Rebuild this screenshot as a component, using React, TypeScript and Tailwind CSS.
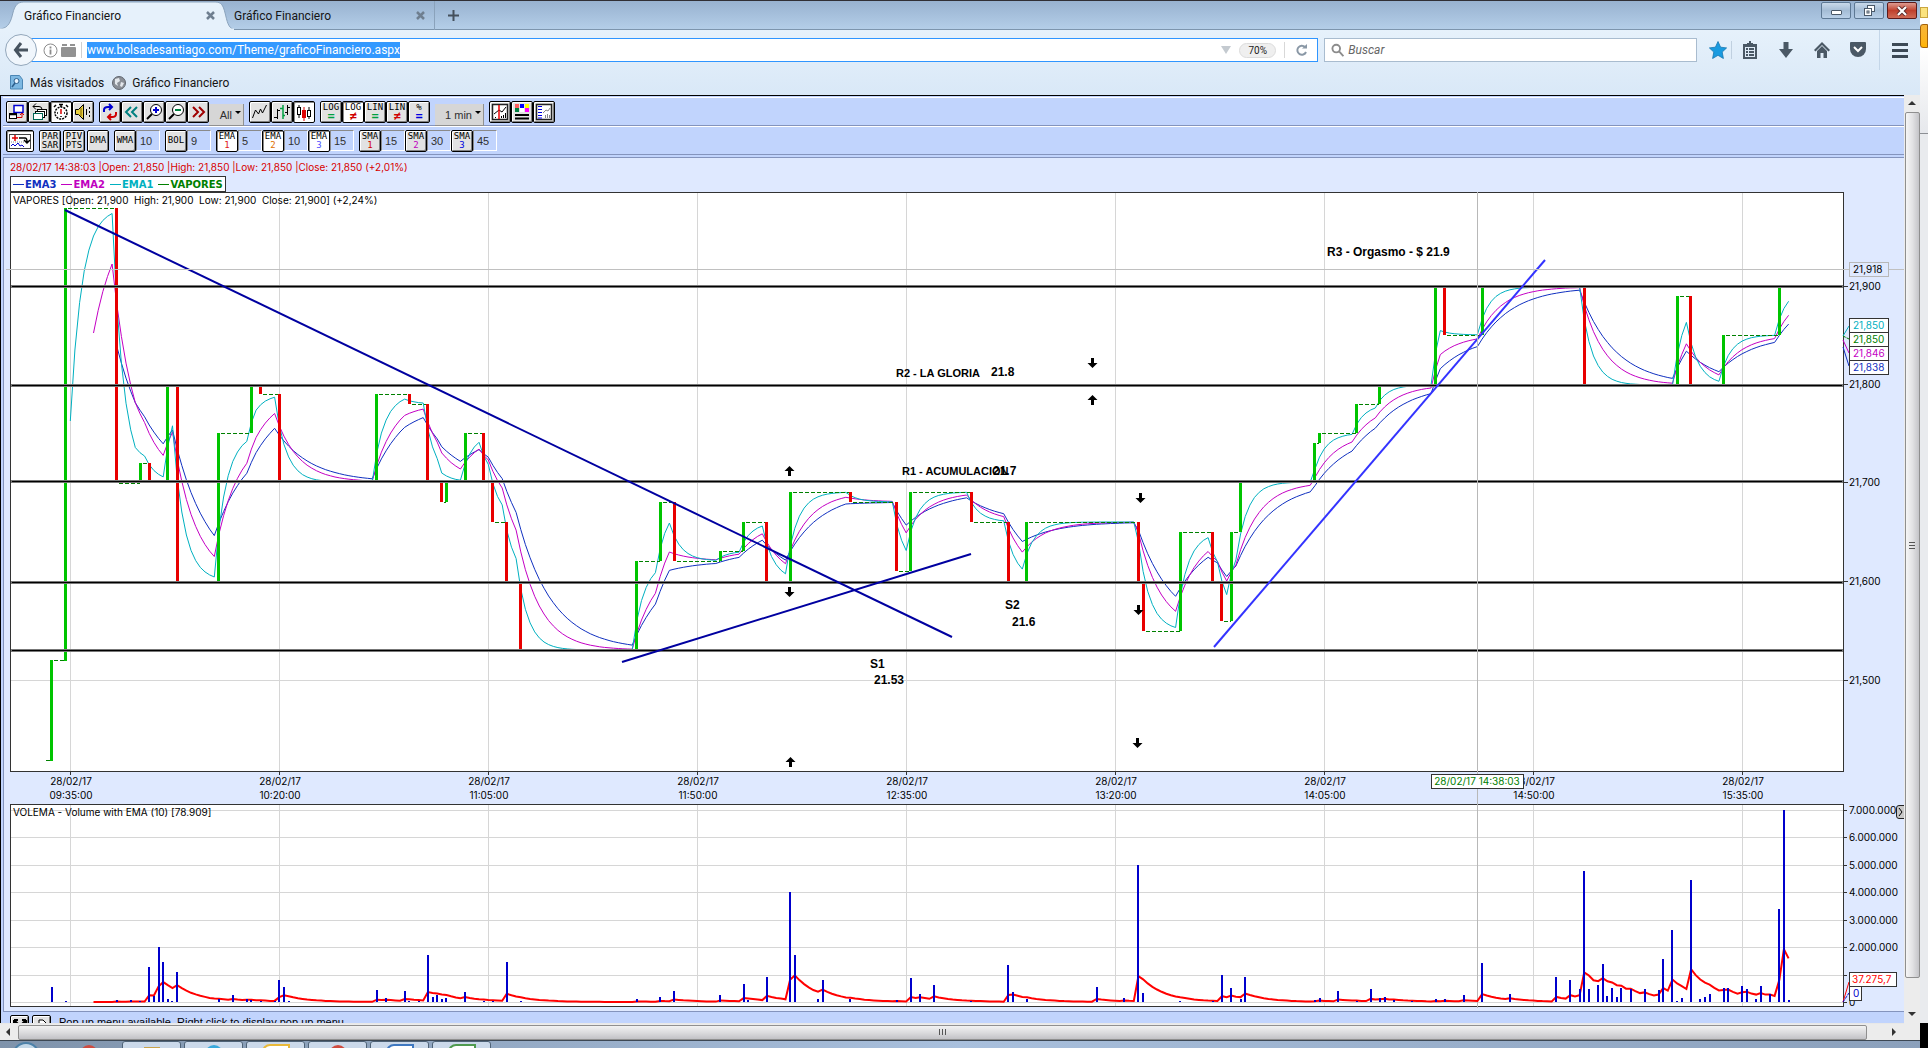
import React from "react";

const UI = "font-['Roboto',sans-serif]";
const CHART_FONT = "font-['Inter',sans-serif]";
const LEGEND_FONT = "font-['DejaVu_Sans',sans-serif]";

/* ---------- market data ---------- */

const FIRST_X = 70.3;
const STEP = 4.644;
const LAST_BAR = 370;
const barX = (k: number) => FIRST_X + k * STEP;

// x, top, bottom, direction (1 = up, 0 = down)
const CANDLES: [number, number, number, 0 | 1][] = [
  [51, 660, 761, 1], [65, 208, 661, 1], [116, 208, 483, 0], [140, 463, 482, 1], [149, 463, 482, 0],
  [167, 385, 482, 1], [177, 385, 581, 0], [218, 433, 581, 1], [251, 385, 433, 1], [260, 385, 394, 0],
  [279, 394, 482, 0], [376, 394, 482, 1], [409, 394, 404, 0], [427, 404, 482, 0], [441, 482, 502, 0],
  [446, 482, 502, 1], [465, 433, 482, 1], [483, 433, 482, 0], [492, 482, 522, 0], [506, 522, 581, 0],
  [520, 581, 650, 0], [636, 561, 650, 1], [660, 502, 561, 1], [674, 502, 561, 0], [720, 551, 561, 1],
  [743, 522, 551, 1], [766, 522, 581, 0], [790, 492, 581, 1], [850, 492, 502, 0], [896, 502, 571, 0],
  [910, 492, 571, 1], [971, 492, 522, 0], [1008, 522, 581, 0], [1026, 522, 581, 1], [1138, 522, 581, 0],
  [1143, 581, 631, 0], [1180, 532, 631, 1], [1212, 532, 581, 0], [1221, 581, 621, 0], [1231, 532, 621, 1],
  [1240, 482, 532, 1], [1314, 443, 482, 1], [1319, 433, 443, 1], [1356, 404, 433, 1], [1379, 385, 404, 1],
  [1435, 287, 385, 1], [1444, 287, 335, 0], [1482, 287, 335, 1], [1584, 287, 385, 0], [1677, 296, 385, 1],
  [1690, 296, 385, 0], [1723, 335, 385, 1], [1779, 287, 335, 1],
];

const closeOf = (c: [number, number, number, 0 | 1]) => (c[3] ? c[1] : c[2]);

const closeAt = (k: number) => {
  let y = 760;
  for (const c of CANDLES) {
    if (Math.round((c[0] - 70) / STEP) <= k) y = closeOf(c);
  }
  return y;
};

const emaPoints = (period: number, start: number, seed: number) => {
  const a = 2 / (period + 1);
  let v = seed;
  const pts: string[] = [];
  for (let k = start; k <= LAST_BAR; k++) {
    if (k > start) v += (closeAt(k) - v) * a;
    pts.push(`${barX(k).toFixed(1)},${v.toFixed(1)}`);
  }
  return pts.join(" ");
};

// minute index, bar height
const VOLUME: [number, number][] = [
  [-4, 15], [-1, 1], [10, 2], [13, 2], [15, 1], [17, 35], [18, 6], [19, 55], [20, 40], [21, 3], [22, 1], [23, 30],
  [32, 3], [35, 7], [38, 3], [39, 2], [41, 1], [44, 1], [45, 22], [46, 15], [47, 1], [66, 12], [68, 4], [72, 11],
  [73, 1], [75, 1], [77, 47], [78, 5], [79, 7], [80, 3], [81, 4], [85, 10], [89, 1], [91, 1], [94, 40], [97, 1],
  [122, 3], [127, 5], [130, 11], [140, 7], [145, 18], [146, 2], [150, 25], [155, 110], [156, 47], [161, 3],
  [162, 22], [168, 3], [178, 2], [181, 24], [183, 8], [186, 17], [194, 1], [202, 37], [203, 10], [206, 3],
  [221, 15], [227, 4], [230, 137], [231, 9], [239, 1], [246, 1], [248, 27], [250, 14], [252, 3], [253, 25],
  [268, 2], [269, 4], [273, 11], [277, 1], [280, 13], [282, 4], [283, 5], [285, 2], [289, 1], [294, 3], [296, 3],
  [300, 7], [304, 39], [310, 8], [320, 25], [323, 22], [325, 13], [326, 131], [327, 13], [329, 17], [330, 38],
  [331, 6], [332, 14], [333, 5], [334, 14], [336, 13], [339, 13], [342, 12], [343, 43], [345, 72], [346, 1],
  [347, 4], [349, 122], [351, 3], [352, 5], [353, 8], [356, 14], [357, 14], [360, 16], [361, 13], [363, 3],
  [364, 16], [366, 8], [368, 93], [369, 192], [370, 2],
];

const volumeEma = () => {
  const m = new Map(VOLUME);
  let v = 0;
  const pts: string[] = [];
  for (let k = 5; k <= LAST_BAR; k++) {
    v += ((m.get(k) ?? 0) - v) * (2 / 11);
    pts.push(`${barX(k).toFixed(1)},${(1002 - v).toFixed(1)}`);
  }
  return pts.join(" ");
};

const TIMES = ["09:35:00", "10:20:00", "11:05:00", "11:50:00", "12:35:00", "13:20:00", "14:05:00", "14:50:00", "15:35:00"];
const GRID_X = TIMES.map((_, i) => 70 + 209 * i);
const LEVELS = [286, 385, 481, 582, 650];
const ARROWS: [number, number, boolean][] = [
  [789, 471, true], [789, 592, false], [790, 762, true], [1092, 363, false],
  [1092, 400, true], [1140, 498, false], [1138, 610, false], [1137, 743, false],
];
const NOTES: [string, number, number, boolean][] = [
  ["R3 - Orgasmo - $ 21.9", 1327, 256, false],
  ["R2 - LA GLORIA", 896, 377, true],
  ["21.8", 991, 376, false],
  ["R1 - ACUMULACION", 902, 475, true],
  ["21.7", 993, 475, false],
  ["S2", 1005, 609, false],
  ["21.6", 1012, 626, false],
  ["S1", 870, 668, false],
  ["21.53", 874, 684, false],
];

function PriceChart() {
  return (
    <svg viewBox="4 192 1900 612" className={`block w-full ${CHART_FONT} text-[10px]`} role="img" aria-label="VAPORES">
      <rect x="10.5" y="192.5" width="1833" height="579" fill="#fff" stroke="#333" />
      {GRID_X.map((x) => (
        <line key={x} x1={x + 0.5} x2={x + 0.5} y1="193" y2="771" stroke="#d6d6d6" />
      ))}
      {[286, 384, 482, 581, 680].map((y) => (
        <line key={y} x1="11" x2="1843" y1={y + 0.5} y2={y + 0.5} stroke="#d6d6d6" />
      ))}
      <text x="13" y="204">VAPORES [Open: 21,900&nbsp; High: 21,900&nbsp; Low: 21,900&nbsp; Close: 21,900] (+2,24%)</text>

      <g fill="none" strokeWidth="1">
        <polyline points={emaPoints(15, 10, 346)} stroke="#1030c0" />
        <polyline points={emaPoints(10, 5, 333)} stroke="#c400c4" />
        <polyline points={emaPoints(5, 0, 421)} stroke="#00b0c0" />
      </g>
      <line x1="46" x2="50" y1="760.5" y2="760.5" stroke="#008000" />
      {CANDLES.map((c, i) => {
        const end = i + 1 < CANDLES.length ? CANDLES[i + 1][0] : 1781;
        const y = closeOf(c) + 0.5;
        return (
          <line key={c[0]} x1={c[0] + 3} x2={end} y1={y} y2={y} stroke="#008000" strokeDasharray="4 2" />
        );
      })}
      {CANDLES.map((c) => (
        <rect key={c[0]} x={c[0] - 1} y={c[1]} width="3" height={c[2] - c[1]} fill={c[3] ? "#00c400" : "#e80000"} />
      ))}
      {LEVELS.map((y) => (
        <g key={y}>
          <rect x="11" y={y - 1} width="1832" height="3" fill="#777" />
          <rect x="12" y={y} width="1830" height="1" fill="#000" />
        </g>
      ))}
      <g stroke="#0000a0" strokeWidth="2">
        <line x1="65" y1="210" x2="952" y2="637" />
        <line x1="622" y1="662" x2="971" y2="554" />
        <line x1="1214" y1="647" x2="1545" y2="260" stroke="#3333ff" />
      </g>
      <line x1="6" x2="1904" y1="269.5" y2="269.5" stroke="#c0c0c0" />
      <line x1="1477.5" x2="1477.5" y1="192" y2="804" stroke="#b8b8b8" />

      {ARROWS.map(([x, y, up]) => (
        <path
          key={`${x}-${y}`}
          transform={`translate(${x + 0.5} ${y})${up ? "" : " rotate(180)"}`}
          d="M0 -5 L5 0 H1.500 V5 H-1.500 V0 H-5 Z"
          fill="#000"
        />
      ))}
      {NOTES.map(([t, x, y, small]) => (
        <text
          key={t}
          x={x}
          y={y}
          className={small ? "font-['Liberation_Sans',sans-serif] text-[11px] font-bold" : "font-['Liberation_Sans',sans-serif] text-[12px] font-bold"}
        >
          {t}
        </text>
      ))}

      {[["21,900", 286], ["21,800", 384], ["21,700", 482], ["21,600", 581], ["21,500", 680]].map(([t, y]) => (
        <g key={t}>
          <line x1="1844" x2="1848" y1={+y + 0.5} y2={+y + 0.5} stroke="#333" />
          <text x="1849" y={+y + 4}>{t}</text>
        </g>
      ))}
      <rect x="1849.5" y="262.5" width="39" height="14" fill="#dfe9ff" stroke="#b8b8b8" />
      <text x="1853" y="273">21,918</text>
      <g fill="none">
        <path d="M1843 336 L1849 326" stroke="#00b0c0" />
        <path d="M1843 336 L1849 339" stroke="#008000" strokeDasharray="3 1" />
        <path d="M1843 340 L1849 353" stroke="#c400c4" />
        <path d="M1843 347 L1849 366" stroke="#1030c0" />
      </g>
      {[["21,850", "#00b0c0"], ["21,850", "#008000"], ["21,846", "#c400c4"], ["21,838", "#1030c0"]].map(([t, c], i) => (
        <g key={i}>
          <rect x="1849.5" y={318.5 + i * 14} width="39" height="14" fill="#fff" stroke="#333" />
          <text x="1853" y={329 + i * 14} fill={c}>{t}</text>
        </g>
      ))}
      {TIMES.map((t, i) => (
        <g key={t} textAnchor="middle">
          <line x1={GRID_X[i] + 0.5} x2={GRID_X[i] + 0.5} y1="772" y2="775" stroke="#333" />
          <text x={GRID_X[i] + 1} y="785">28/02/17</text>
          <text x={GRID_X[i] + 1} y="799">{t}</text>
        </g>
      ))}
      <rect x="1431.5" y="774.5" width="92" height="14" fill="#fff" stroke="#333" />
      <text x="1477" y="785" textAnchor="middle" fill="#008000">28/02/17 14:38:03</text>
    </svg>
  );
}

function VolumeChart() {
  const rows = [
    ["7.000.000", 810], ["6.000.000", 837], ["5.000.000", 865], ["4.000.000", 892],
    ["3.000.000", 920], ["2.000.000", 947], ["", 975], ["0", 1002],
  ] as [string, number][];
  return (
    <svg viewBox="4 804 1900 206" className={`block w-full ${CHART_FONT} text-[10px]`} role="img" aria-label="VOLEMA">
      <rect x="10.5" y="804.5" width="1833" height="202" fill="#fff" stroke="#333" />
      {GRID_X.map((x) => (
        <line key={x} x1={x + 0.5} x2={x + 0.5} y1="805" y2="1006" stroke="#d6d6d6" />
      ))}
      {rows.map(([t, y]) => (
        <g key={y}>
          <line x1="11" x2="1843" y1={y + 0.5} y2={y + 0.5} stroke="#d6d6d6" />
          <line x1="1844" x2="1847" y1={y + 0.5} y2={y + 0.5} stroke="#333" />
          <text x="1849" y={y + 4}>{t}</text>
        </g>
      ))}
      <line x1="1477.5" x2="1477.5" y1="804" y2="1008" stroke="#b8b8b8" />
      <text x="13" y="816">VOLEMA - Volume with EMA (10) [78.909]</text>
      <polyline points={volumeEma()} fill="none" stroke="#ff0000" strokeWidth="2" />
      {VOLUME.map(([k, h]) => (
        <rect key={k} x={Math.round(barX(k)) - 1} y={1002 - h} width="2" height={h} fill="#0000cc" />
      ))}
      <path d="M1843 1002 L1849 982" stroke="#f00" />
      <path d="M1843 1002 L1849 993" stroke="#00c" strokeDasharray="3 1" />
      <rect x="1849.5" y="972.5" width="47" height="14" fill="#fff" stroke="#333" />
      <text x="1852" y="983" fill="#f00">37.275,7</text>
      <rect x="1849.5" y="986.5" width="12" height="14" fill="#fff" stroke="#333" />
      <text x="1853" y="997" fill="#00c">0</text>
      <path d="M1905 805.5 H1899 Q1896.5 805.5 1896.5 808 V816 Q1896.5 818.5 1899 818.5 H1905" fill="#c8c8c8" stroke="#222" />
      <path d="M1899 808 L1902 812 L1899 816" fill="none" stroke="#000" />
    </svg>
  );
}

/* ---------- toolbar ---------- */

type BtnProps = { label: string; on?: boolean; wide?: boolean; small?: boolean; children: React.ReactNode };

function ToolButton({ label, on, wide, small, children }: BtnProps) {
  return (
    <button
      type="button"
      aria-label={label}
      className={`flex h-[22px] ${wide ? "w-[28px]" : small ? "w-[19px]" : "w-[22px]"} shrink-0 flex-col items-center justify-center overflow-hidden rounded-[2px] border border-black p-px ${
        on
          ? "bg-white shadow-[inset_1px_1px_0_#888]"
          : "bg-[#e2e2e2] shadow-[inset_1px_1px_0_#fff,inset_-1px_-1px_0_#808080]"
      }`}
    >
      {children}
    </button>
  );
}

function Pic({ children, w = 18 }: { children: React.ReactNode; w?: number }) {
  return (
    <svg width={w} height="18" viewBox={`0 0 ${w} 18`} fill="none" stroke="#000" strokeWidth="1" className="shrink-0">
      {children}
    </svg>
  );
}

const MONO = "font-['DejaVu_Sans_Mono',monospace]";

function TextBtn({ top, bottom, color = "text-black", on, big }: { top: string; bottom?: string; color?: string; on?: boolean; big?: boolean }) {
  return (
    <ToolButton label={`${top} ${bottom ?? ""}`} on={on}>
      <span className={`${MONO} text-[9px] leading-[9px] text-black`}>{top}</span>
      {bottom && (
        <span className={`${MONO} ${big ? "text-[12px] leading-[8px] font-bold" : "text-[9px] leading-[9px]"} ${color}`}>{bottom}</span>
      )}
    </ToolButton>
  );
}

function NumField({ label, value }: { label: string; value: string }) {
  return (
    <input
      aria-label={label}
      defaultValue={value}
      className="h-[21px] w-[24px] border border-t-[#8a8a8a] border-r-white border-b-white border-l-[#8a8a8a] bg-[#c1d4fd] pl-[3px] font-['Liberation_Sans',sans-serif] text-[11px] text-[#303030]"
    />
  );
}

function Drop({ label, value, cls }: { label: string; value: string; cls: string }) {
  return (
    <div className={`relative h-[22px] ${cls}`}>
      <select
        aria-label={label}
        className="h-full w-full appearance-none border-r border-b border-[#909090] bg-[#d6d6d6] pr-[11px] text-right font-['Liberation_Sans',sans-serif] text-[11px] text-[#303030] [text-align-last:right]"
      >
        <option>{value}</option>
      </select>
      <span className="pointer-events-none absolute top-[10px] right-[3px] border-x-[3px] border-t-[3px] border-x-transparent border-t-black" />
    </div>
  );
}

function ToolbarOne() {
  return (
    <div className="flex h-[29px] items-center gap-[5px] border-t border-b border-t-white border-b-[#8494bd] bg-[#c1d4fd] pl-[3px]">
      <div className="flex">
        <ToolButton label="Detach">
          <Pic>
            <rect x="6" y="2.500" width="9" height="7" fill="#fff" stroke="#0000d0" strokeWidth="1.500" />
            <rect x="1.500" y="10.500" width="7" height="5" fill="#fff" />
            <path d="M2 11.500h7" strokeWidth="1.500" />
            <path d="M9 14.500h5v-4M12 12l2-2 2 2" stroke="#d00000" />
          </Pic>
        </ToolButton>
        <ToolButton label="Cascade">
          <Pic>
            <rect x="7.500" y="6.500" width="9" height="6" fill="#fff" />
            <rect x="5.500" y="8.500" width="9" height="6" fill="#fff" />
            <rect x="3.500" y="10.500" width="9" height="6" fill="#fff" stroke="#065" />
            <path d="M3 3.500h6q3 0 3 3M3 3.500l3-3M3 3.500l3 3" />
          </Pic>
        </ToolButton>
        <ToolButton label="Timer" on>
          <Pic>
            <circle cx="9" cy="10" r="6" strokeDasharray="2 1" strokeWidth="1.500" />
            <path d="M7 1.500h4M9 2v2M2 4l2-2M16 4l-2-2M5 10h1M12 10h1M9 13v1" strokeWidth="1.500" />
            <path d="M9 6v5" stroke="#d00" strokeWidth="1.500" />
          </Pic>
        </ToolButton>
        <ToolButton label="Sound">
          <Pic>
            <path d="M1.500 6.500h3l5-5v15l-5-5h-3z" fill="#e8d040" />
            <path d="M7 5v8" stroke="#806000" />
            <path d="M12.500 6v6M15.500 4v2M15.500 8v2M15.500 12v2" />
          </Pic>
        </ToolButton>
      </div>
      <div className="flex">
        <ToolButton label="Refresh">
          <Pic>
            <path d="M3 9V7q0-3 4-3h3M8 1l3 3-3 3" stroke="#0000d0" strokeWidth="2" />
            <path d="M15 9v2q0 3-4 3H8M10 11l-3 3 3 3" stroke="#d00000" strokeWidth="2" />
          </Pic>
        </ToolButton>
        <ToolButton label="Back">
          <Pic>
            <path d="M8 4L3 9l5 5M14 4L9 9l5 5" stroke="#008080" strokeWidth="2" />
          </Pic>
        </ToolButton>
        <ToolButton label="Zoom in">
          <Pic>
            <circle cx="11" cy="7" r="5.500" fill="#fff" />
            <path d="M7 11l-5 5" strokeWidth="2" />
            <path d="M8 7h6M11 4v6" stroke="#0000d0" strokeWidth="2" />
          </Pic>
        </ToolButton>
        <ToolButton label="Zoom out">
          <Pic>
            <circle cx="11" cy="7" r="5.500" fill="#fff" />
            <path d="M7 11l-5 5" strokeWidth="2" />
            <path d="M8 7h6" stroke="#008040" strokeWidth="2" />
          </Pic>
        </ToolButton>
        <ToolButton label="Forward">
          <Pic>
            <path d="M4 4l5 5-5 5M10 4l5 5-5 5" stroke="#a00000" strokeWidth="2" />
          </Pic>
        </ToolButton>
        <Drop label="Range" value="All" cls="w-[35px]" />
      </div>
      <div className="flex">
        <ToolButton label="Line chart">
          <Pic>
            <path d="M1.500 15l3-8 3 4 2-5 2 4 4-8" />
          </Pic>
        </ToolButton>
        <ToolButton label="Bar chart">
          <Pic>
            <path d="M4.500 6v10M1 14.500h3M4 7.500h3M14.500 2v10M12 9.500h3M15 4.500h2" />
            <path d="M10 2v14M7 5.500h3M10 12.500h2" stroke="#00a040" strokeWidth="1.500" />
          </Pic>
        </ToolButton>
        <ToolButton label="Candles" on>
          <Pic>
            <path d="M4 2v13M14 4v12" />
            <rect x="2.500" y="4.500" width="3" height="7" fill="#fff" />
            <path d="M9 4v14" stroke="#d00" />
            <rect x="7.500" y="7.500" width="3" height="7" fill="#d00" stroke="#d00" />
            <rect x="12.500" y="7.500" width="3" height="6" fill="#fff" />
          </Pic>
        </ToolButton>
      </div>
      <div className="flex">
        <TextBtn top="LOG" bottom="=" color="text-[#00a040]" big />
        <TextBtn top="LOG" bottom="≠" color="text-[#d00000]" on big />
        <TextBtn top="LIN" bottom="=" color="text-[#00a040]" big />
        <TextBtn top="LIN" bottom="≠" color="text-[#d00000]" big />
        <TextBtn top="%" bottom="=" color="text-[#0000e0]" big />
      </div>
      <Drop label="Interval" value="1 min" cls="w-[49px]" />
      <div className="flex">
        <ToolButton label="Crosshair">
          <Pic>
            <rect x="1.500" y="1.500" width="15" height="15" fill="#fff" stroke="#222" strokeWidth="1.500" />
            <path d="M3 11l5-4 3 2 4-5M12.500 12v3M14.500 10v5M10.500 13v2M4.500 14v1" />
            <path d="M8 2v14" stroke="#e00" strokeWidth="1.500" />
          </Pic>
        </ToolButton>
        <ToolButton label="Colors">
          <Pic>
            <g stroke="none">
              <rect x="2" y="1" width="4" height="4" fill="#ff6060" />
              <rect x="7" y="1" width="4" height="4" fill="#0000ff" />
              <rect x="12" y="1" width="4" height="4" fill="#ffff00" />
              <rect x="2" y="5" width="4" height="4" fill="#008040" />
              <rect x="7" y="5" width="4" height="4" fill="#fff" />
              <rect x="12" y="5" width="4" height="4" fill="#ff00ff" />
            </g>
            <path d="M2 12h14M2 15.500h14" strokeWidth="2" />
          </Pic>
        </ToolButton>
        <ToolButton label="Data">
          <Pic>
            <rect x="1.500" y="1.500" width="15" height="15" fill="#fff" stroke="#222" strokeWidth="1.500" />
            <path d="M3 3.500h4M3 6.500h4M3 9.500h4M3 12.500h4M3 15h4" stroke="#0000e0" />
            <path d="M8 10l3-3 2 1 2-3M10.500 12v3M12.500 11v4M14.500 12v3" stroke="#888" />
          </Pic>
        </ToolButton>
      </div>
    </div>
  );
}

function ToolbarTwo() {
  const pairs = [
    ["EMA", "1", "text-[#e02020]", "5", true],
    ["EMA", "2", "text-[#e07000]", "10", true],
    ["EMA", "3", "text-[#5050ff]", "15", true],
    ["SMA", "1", "text-[#d00000]", "15", false],
    ["SMA", "2", "text-[#c000c0]", "30", false],
    ["SMA", "3", "text-[#0000e0]", "45", false],
  ] as [string, string, string, string, boolean][];
  const group = (list: typeof pairs) => (
    <div className="flex">
      {list.map(([t, b, c, v, on]) => (
        <div key={t + b} className="flex items-center">
          <TextBtn top={t} bottom={b} color={c} on={on} />
          <NumField label={`${t} ${b} period`} value={v} />
        </div>
      ))}
    </div>
  );
  return (
    <div className="flex h-[29px] items-center gap-[5px] border-t border-b border-t-white border-b-[#8494bd] bg-[#c1d4fd] pl-[3px]">
      <ToolButton label="Indicators" wide on>
        <Pic w={24}>
          <rect x="1.500" y="2.500" width="21" height="14" stroke="#444" />
          <path d="M4 6h6M7 3v6" stroke="#d00" strokeWidth="1.500" />
          <path d="M11 6h6q2 0 2 4M16 8l3 3 3-3" strokeWidth="1.500" />
          <path d="M3 10h14" stroke="#888" strokeDasharray="1 1" />
          <path d="M3 14l2-2 2 2 3-3 2 3 2-1 2 2" stroke="#0000d0" />
        </Pic>
      </ToolButton>
      <div className="flex gap-[2px]">
        <TextBtn top="PAR" bottom="SAR" />
        <TextBtn top="PIV" bottom="PTS" />
        <TextBtn top="DMA" />
      </div>
      <div className="flex items-center">
        <TextBtn top="WMA" />
        <NumField label="WMA period" value="10" />
      </div>
      <div className="flex items-center">
        <TextBtn top="BOL" />
        <NumField label="BOL period" value="9" />
      </div>
      {group(pairs.slice(0, 3))}
      {group(pairs.slice(3))}
    </div>
  );
}

/* ---------- browser ---------- */

function CloseX() {
  return (
    <button type="button" aria-label="Cerrar pestaña" className="flex size-3 items-center justify-center">
      <svg width="9" height="9" viewBox="0 0 9 9" stroke="#6f7f90" strokeWidth="2.500">
        <path d="M1 1l7 7M8 1l-7 7" />
      </svg>
    </button>
  );
}

function TitleBar() {
  return (
    <div className="flex h-[30px] items-stretch border-t border-[#302f35] bg-linear-to-b from-[#98b2d0] to-[#b5cfe9] shadow-[inset_0_-1px_0_#7d95ad]">
      <div className="relative w-[234px]">
        <svg className="absolute inset-0 h-full w-full" viewBox="0 0 236 29" preserveAspectRatio="none">
          <path d="M0 29 V28 C9 27 11 20 13 12 C15 4 18 1 24 1 H217 C223 1 225 4 227 12 C229 20 230 27 236 28.500 V29 Z" fill="#e6f1fb" stroke="#8aa2bb" strokeWidth="1" />
          <path d="M0 28.500 H236" stroke="#e6f1fb" strokeWidth="2" />
        </svg>
        <div className={`relative flex h-full items-center justify-between pr-[18px] pl-6 text-[12px] text-[#151515] ${UI}`}>
          <span>Gráfico Financiero</span>
          <CloseX />
        </div>
      </div>
      <div className={`flex w-[201px] items-center justify-between border-r border-[#8aa2bb] pr-2 text-[12px] text-[#151515] ${UI}`}>
        <span>Gráfico Financiero</span>
        <CloseX />
      </div>
      <button type="button" aria-label="Nueva pestaña" className="flex w-9 items-center justify-center">
        <svg width="11" height="11" viewBox="0 0 11 11" stroke="#45505c" strokeWidth="2">
          <path d="M5.500 0v11M0 5.500h11" />
        </svg>
      </button>
      <div className="ml-auto flex items-start gap-[3px] pt-px pr-[3px]">
        <button type="button" aria-label="Minimizar" className="flex h-[17px] w-[30px] items-center justify-center rounded-[2px] border border-[#5d7894] bg-linear-to-b from-[#c9d9ea] via-[#a4bcd5] to-[#b9d0e8]">
          <span className="mt-1 h-[5px] w-[11px] rounded-[1px] border border-[#4a5868] bg-white" />
        </button>
        <button type="button" aria-label="Restaurar" className="flex h-[17px] w-[30px] items-center justify-center rounded-[2px] border border-[#5d7894] bg-linear-to-b from-[#c9d9ea] via-[#a4bcd5] to-[#b9d0e8]">
          <svg width="13" height="11" viewBox="0 0 13 11" fill="#fff" stroke="#4a5868">
            <rect x="4.500" y="0.500" width="7" height="6" />
            <rect x="1.500" y="3.500" width="7" height="7" />
            <rect x="4" y="6" width="2" height="2" />
          </svg>
        </button>
        <button type="button" aria-label="Cerrar" className="flex h-[17px] w-[30px] items-center justify-center rounded-[2px] border border-[#5c1a1a] bg-linear-to-b from-[#dd9a90] via-[#bf3f2c] to-[#cf6a55]">
          <svg width="12" height="10" viewBox="0 0 12 10">
            <path d="M2 1l8 8M10 1L2 9" stroke="#5a2a2a" strokeWidth="4" />
            <path d="M2 1l8 8M10 1L2 9" stroke="#fff" strokeWidth="2.200" />
          </svg>
        </button>
      </div>
    </div>
  );
}

function NavIcon({ label, children }: { label: string; children: React.ReactNode }) {
  return (
    <button type="button" aria-label={label} className="flex w-9 items-center justify-center">
      <svg width="18" height="18" viewBox="0 0 18 18" fill="#4a5865">{children}</svg>
    </button>
  );
}

function NavBar() {
  return (
    <div className="bg-linear-to-b from-[#e6f1fb] to-[#d9e8f7]">
      <div className="flex h-10 items-center pr-2 pl-[5px]">
        <button type="button" aria-label="Atrás" className="relative z-10 flex size-8 shrink-0 items-center justify-center rounded-full border border-[#93a7bb] bg-[#f0f6fc]">
          <svg width="16" height="16" viewBox="0 0 16 16" fill="none" stroke="#47535f" strokeWidth="3">
            <path d="M8 1L2.500 8L8 15M2 8h13" />
          </svg>
        </button>
        <div className={`-ml-2 flex h-6 flex-1 items-center border border-[#2f95ff] bg-white pl-[18px] text-[12px] ${UI}`}>
          <svg width="15" height="15" viewBox="0 0 15 15" fill="none" stroke="#8c8c8c" className="-ml-[5px]">
            <circle cx="7.500" cy="7.500" r="6.500" />
            <path d="M7.500 6.500v5M7.500 3.500v2" strokeWidth="1.800" />
          </svg>
          <svg width="15" height="13" viewBox="0 0 15 13" fill="#929292" className="ml-[3px]">
            <rect y="3" width="15" height="10" rx="1" />
            <rect x="1" width="5" height="2" />
            <rect x="9" width="5" height="2" />
          </svg>
          <span className="mx-[5px] h-4 w-px bg-[#d0d0d0]" />
          <input
            aria-label="Dirección"
            defaultValue="www.bolsadesantiago.com/Theme/graficoFinanciero.aspx"
            className="h-4 field-sizing-content bg-[#3399ff] leading-4 text-white"
          />
          <span className="ml-auto border-x-[5px] border-t-[8px] border-x-transparent border-t-[#c4cad0]" />
          <span className="mx-2 rounded-full border border-[#dcdcdc] bg-[#efefef] px-[8px] text-[10px] leading-[13px] text-[#222]">70%</span>
          <span className="h-4 w-px bg-[#d8d8d8]" />
          <button type="button" aria-label="Recargar" className="flex w-8 items-center justify-center">
            <svg width="13" height="13" viewBox="0 0 13 13" fill="none" stroke="#8a98a6" strokeWidth="2">
              <path d="M10 3A4.500 4.500 0 1 0 11 8" />
              <path d="M7 4.500h5V0z" fill="#8a98a6" stroke="none" />
            </svg>
          </button>
        </div>
        <div className="ml-[6px] flex h-6 w-[373px] items-center gap-1 border border-[#a9bccf] bg-white pl-[6px]">
          <svg width="14" height="14" viewBox="0 0 14 14" fill="none" stroke="#8c8c8c" strokeWidth="2">
            <circle cx="5.500" cy="5.500" r="4" />
            <path d="M8.500 8.500l4.500 5" />
          </svg>
          <input aria-label="Buscar" placeholder="Buscar" className={`w-full text-[12px] italic placeholder:text-[#666] ${UI}`} />
        </div>
        <button type="button" aria-label="Marcador" className="ml-3 flex w-[23px] items-center border-r border-[#c0d0e0]">
          <svg width="18" height="18" viewBox="0 0 18 18">
            <path d="M9 0.500l2.600 5.700 6 .7-4.400 4.200 1.200 6.400L9 14.300l-5.400 3.200 1.200-6.400L.4 6.900l6-.7z" fill="#1a9be0" stroke="#1676b0" strokeWidth=".8" />
          </svg>
        </button>
        <NavIcon label="Lista">
          <path d="M6 3V2h2V0h2v2h2v1h4v15H2V3z" />
          <path d="M4 6h10v10H4z" fill="#dfebf7" />
          <path d="M5 7h2v2H5zM8 7h5v2H8zM5 10h2v2H5zM8 10h5v2H8zM5 13h2v2H5zM8 13h5v2H8z" />
        </NavIcon>
        <NavIcon label="Descargas">
          <path d="M6.500 1h5v7H16l-7 9-7-9h4.500z" />
        </NavIcon>
        <NavIcon label="Inicio">
          <path d="M9 1l8 8-1.500 1.500L9 4l-6.500 6.500L1 9z" />
          <path d="M4 10l5-5 5 5v7h-3.500v-5h-3v5H4z" />
        </NavIcon>
        <NavIcon label="Pocket">
          <path d="M1 2q0-1 1-1h14q1 0 1 1v6a8 8 0 0 1-16 0z" />
          <path d="M5 6l4 4 4-4" fill="none" stroke="#fff" strokeWidth="2" />
        </NavIcon>
        <span className="ml-[3px] h-10 w-px bg-[#c4d6e8]" />
        <button type="button" aria-label="Menú" className="ml-3 flex flex-col gap-[3px] pr-1">
          <span className="h-[3px] w-4 bg-[#3d4a56]" />
          <span className="h-[3px] w-4 bg-[#3d4a56]" />
          <span className="h-[3px] w-4 bg-[#3d4a56]" />
        </button>
      </div>
      <div className={`flex h-[25px] items-center pl-[9px] text-[12px] text-[#151515] ${UI}`}>
        <a href="#visitados" className="flex items-center gap-[6px]">
          <svg width="15" height="15" viewBox="0 0 15 15" fill="#7db8e2" stroke="#4b86b4">
            <path d="M1.500.5h9l3 4v9.500h-12z" />
            <circle cx="7.500" cy="6" r="2.500" fill="#e8f4ff" stroke="#2d5f8c" />
            <path d="M6 8l-3 4" stroke="#2d5f8c" strokeWidth="1.500" />
          </svg>
          Más visitados
        </a>
        <a href="#grafico" className="ml-[8px] flex items-center gap-[6px]">
          <svg width="14" height="14" viewBox="0 0 14 14">
            <circle cx="7" cy="7" r="6.500" fill="#8a8f96" stroke="#5f656d" />
            <path d="M3 3l4-1 1 3-3 2 1 3-3-2zM9 6l3 1-2 4-2-1z" fill="#e4e8ec" />
          </svg>
          Gráfico Financiero
        </a>
      </div>
    </div>
  );
}

function VerticalScroll() {
  return (
    <div className="flex w-4 shrink-0 flex-col items-center bg-[#ececec] pt-[6px]">
      <span className="border-x-[4px] border-b-[4px] border-x-transparent border-b-[#333]" />
      <div className="mt-[7px] flex h-[866px] w-[15px] flex-col items-center justify-center gap-px rounded-[2px] border border-[#8f8f8f] bg-linear-to-r from-[#f6f6f6] via-[#e2e2e4] to-[#c4c4c8]">
        <span className="h-px w-[6px] bg-[#555]" />
        <span className="mt-px h-px w-[6px] bg-[#555]" />
        <span className="mt-px h-px w-[6px] bg-[#555]" />
      </div>
      <span className="mt-auto mb-[24px] border-x-[4px] border-t-[4px] border-x-transparent border-t-[#333]" />
    </div>
  );
}

function Taskbar() {
  const items = [
    ["#c9a24a", "plain"], ["#39a9dc", "round"], ["#e9b93a", "doc"], ["#cf4b3f", "round"], ["#3f78c0", "doc"], ["#4f9a4f", "doc"],
  ];
  return (
    <div className="flex h-[8px] items-start overflow-hidden border-t border-[#3d4854] bg-linear-to-r from-[#7f93ab] via-[#a9c0dd] to-[#8ba0bb]">
      <span className="mt-px ml-3 h-7 w-7 shrink-0 rounded-full border-2 border-[#4d81a8] bg-[#c4d8e8]" />
      <span className="mt-[4px] ml-10 h-6 w-[18px] shrink-0 rounded-full bg-[#cf4b3f]" />
      <div className="ml-6 flex gap-[3px]">
        {items.map(([c, kind], i) => (
          <button key={i} type="button" aria-label={`Aplicación ${i + 1}`} className="flex h-10 w-[59px] items-start justify-center rounded-[3px] border border-[#4f6377] bg-[#cbd9ea]">
            {kind === "doc" && <span className="mt-[2px] h-7 w-7 rounded-tl-lg border-2 bg-white" style={{ borderColor: c }} />}
            {kind === "round" && <span className="mt-[3px] size-[18px] rounded-full" style={{ background: c }} />}
            {kind === "plain" && <span className="mt-[5px] h-6 w-4" style={{ background: c }} />}
          </button>
        ))}
      </div>
    </div>
  );
}

function BackgroundWindow() {
  return (
    <div className="flex w-2 shrink-0 flex-col overflow-hidden bg-[#e9ebee]">
      <div className="flex h-6 items-center bg-white">
        <span className="h-[11px] w-2 border border-[#c9a640] bg-[#fbe37e]" />
      </div>
      <div className="h-6 rounded-l-[3px] border border-[#a4620a] bg-linear-to-b from-[#f6b53a] to-[#ffb400]" />
      <div className="h-[86px] border-b border-[#8c8f94] bg-linear-to-b from-white to-[#e6e8ec]" />
      <div className="flex-1" />
      <div className="h-[25px] bg-black" />
    </div>
  );
}

export default function App() {
  return (
    <div className="flex min-h-screen w-full items-stretch overflow-hidden bg-black">
      <div className="flex min-w-0 flex-1 flex-col">
        <TitleBar />
        <NavBar />
        <main className="flex flex-1 bg-[#c1d4fd]">
          <div className="flex min-w-0 flex-1 flex-col">
            <div className="flex flex-1 flex-col border-t border-l border-black bg-[#c1d4fd] pl-[2px]">
              <div className="pt-px">
                <ToolbarOne />
                <ToolbarTwo />
              </div>
              <section className="mt-[2px] border-t border-l border-[#8494bd] bg-[#dfe9ff] pb-px">
                <div className={`flex h-[18px] items-center pl-[6px] text-[10px] text-[#d80000] ${CHART_FONT}`}>
                  28/02/17 14:38:03 |Open: 21,850 |High: 21,850 |Low: 21,850 |Close: 21,850 (+2,01%)
                </div>
                <div className={`ml-[6px] flex h-4 w-fit items-center gap-[5px] border border-[#333] bg-white px-[2px] text-[10px] font-bold ${LEGEND_FONT}`}>
                  <span className="flex items-center gap-px text-[#1030c0]"><i className="h-px w-[11px] bg-current" />EMA3</span>
                  <span className="flex items-center gap-px text-[#c000c0]"><i className="h-px w-[11px] bg-current" />EMA2</span>
                  <span className="flex items-center gap-px text-[#00b0c0]"><i className="h-px w-[11px] bg-current" />EMA1</span>
                  <span className="flex items-center gap-px text-[#008000]"><i className="h-px w-[11px] bg-current" />VAPORES</span>
                </div>
                <PriceChart />
                <VolumeChart />
              </section>
              <div className="flex h-[12px] items-start gap-[3px] overflow-hidden border-t border-[#8494bd] bg-[#c1d4fd] pt-[3px] pl-[7px]">
                <ToolButton label="Expandir" small>
                  <Pic>
                    <path d="M3 3l4 4M15 3l-4 4M3 3h4M3 3v4M15 3h-4M15 3v4" strokeWidth="2" />
                    <path d="M6 8h6" stroke="#d00" strokeWidth="2" />
                  </Pic>
                </ToolButton>
                <ToolButton label="Imprimir" small>
                  <Pic>
                    <path d="M6 8V3h4l3 3v4M3 9h12v7H3z" fill="#fff" />
                  </Pic>
                </ToolButton>
                <span className="ml-[5px] pt-px font-['Liberation_Sans',sans-serif] text-[11px] leading-[13px] whitespace-nowrap text-black">
                  Pop up menu available. Right click to display pop up menu
                </span>
              </div>
            </div>
            <div className="flex h-[17px] items-center border-t border-[#e8e8e8] bg-[#ececec] pl-[6px]">
              <span className="border-y-[4px] border-r-[4px] border-y-transparent border-r-[#333]" />
              <div className="ml-[8px] flex h-[15px] flex-1 items-center justify-center gap-[2px] rounded-[2px] border border-[#8f8f8f] bg-linear-to-b from-[#f2f2f2] via-[#dcdcde] to-[#c2c2c6]">
                <span className="h-[6px] w-px bg-[#555]" />
                <span className="h-[6px] w-px bg-[#555]" />
                <span className="h-[6px] w-px bg-[#555]" />
              </div>
              <span className="mr-[8px] ml-[25px] border-y-[4px] border-l-[4px] border-y-transparent border-l-[#333]" />
            </div>
          </div>
          <VerticalScroll />
        </main>
        <Taskbar />
      </div>
      <BackgroundWindow />
    </div>
  );
}
